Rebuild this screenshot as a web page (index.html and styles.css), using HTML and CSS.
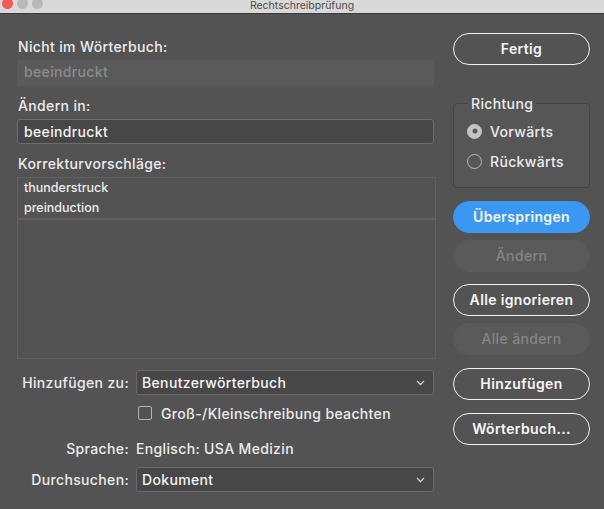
FILE: index.html
```html
<!DOCTYPE html>
<html lang="de">
<head>
    <meta charset="UTF-8">
    <title>Rechtschreibprüfung</title>
    <link rel="stylesheet" href="styles.css">
</head>
<body>
    <div class="titlebar">
        <span class="light red"></span>
        <span class="light"></span>
        <span class="light"></span>
        <span class="title">Rechtschreibprüfung</span>
    </div>
    <div class="dialog">
        <div class="left">
            <div class="label">Nicht im Wörterbuch:</div>
            <div class="field disabled">beeindruckt</div>
            <div class="label gap">Ändern in:</div>
            <div class="field input">beeindruckt</div>
            <div class="label gap">Korrekturvorschläge:</div>
            <div class="list">
                <div class="list-top">
                    <div>thunderstruck</div>
                    <div>preinduction</div>
                </div>
            </div>

            <div class="row first">
                <span class="row-label">Hinzufügen zu:</span>
                <div class="select">
                    Benutzerwörterbuch
                    <svg class="chev" width="9" height="6" viewBox="0 0 9 6"><path d="M1 1 L4.5 4.5 L8 1" fill="none" stroke="#d0d0d0" stroke-width="1.3"/></svg>
                </div>
            </div>
            <div class="row check-row">
                <span class="row-label"></span>
                <span class="checkbox"></span>
                <span>Groß-/Kleinschreibung beachten</span>
            </div>
            <div class="row lang-row">
                <span class="row-label">Sprache:</span>
                <span>Englisch: USA Medizin</span>
            </div>
            <div class="row search-row">
                <span class="row-label">Durchsuchen:</span>
                <div class="select">
                    Dokument
                    <svg class="chev" width="9" height="6" viewBox="0 0 9 6"><path d="M1 1 L4.5 4.5 L8 1" fill="none" stroke="#d0d0d0" stroke-width="1.3"/></svg>
                </div>
            </div>
        </div>

        <div class="right">
            <div class="btn">Fertig</div>
            <fieldset class="group">
                <legend>Richtung</legend>
                <div class="radio-row"><span class="radio on"></span>Vorwärts</div>
                <div class="radio-row"><span class="radio"></span>Rückwärts</div>
            </fieldset>
            <div class="btn primary tight">Überspringen</div>
            <div class="btn off">Ändern</div>
            <div class="btn tight">Alle ignorieren</div>
            <div class="btn off wide">Alle ändern</div>
            <div class="btn">Hinzufügen</div>
            <div class="btn">Wörterbuch...</div>
        </div>
    </div>
</body>
</html>
```

FILE: styles.css
```css
body, html {
    margin: 0;
    padding: 0;
    height: 100%;
    background-color: #535353;
    font-family: Inter, "Open Sans", sans-serif;
    color: #ececec;
    letter-spacing: 0.35px;
    overflow: hidden;
}

.titlebar {
    height: 13px;
    background-color: #d9d9d9;
    border-bottom: 1px solid #3a3a3a;
    display: flex;
    align-items: center;
    position: relative;
}

.light {
    width: 11px;
    height: 11px;
    border-radius: 50%;
    background-color: #b9b9b9;
    margin-left: 4px;
    margin-top: -6px;
    flex-shrink: 0;
}

.light.red {
    background-color: #f25a53;
    margin-left: 2px;
}

.title {
    position: absolute;
    left: 0;
    right: 0;
    top: 0;
    text-align: center;
    font-size: 10.5px;
    line-height: 11px;
    letter-spacing: 0;
    color: #4b4b4b;
}

.dialog {
    display: flex;
    padding: 19px 0 0 17px;
}

.left {
    width: 417px;
    margin-top: 2px;
    display: flex;
    flex-direction: column;
}

.right {
    width: 137px;
    margin-left: 19px;
    display: flex;
    flex-direction: column;
}

.label {
    font-size: 14px;
    font-weight: 500;
    line-height: 17px;
    margin-top: 3px;
    padding-left: 1px;
    margin-bottom: 5px;
}

.label.gap {
    margin-top: 11px;
}

.field {
    height: 26px;
    box-sizing: border-box;
    font-size: 14px;
    font-weight: 500;
    line-height: 24px;
    padding-left: 6px;
}

.field.disabled {
    background-color: #5a5a5a;
    color: #8c8c8c;
    padding-left: 7px;
}

.field.input {
    height: 25px;
    background-color: #474747;
    border: 1px solid #6e6e6e;
    border-radius: 3px;
    color: #f4f4f4;
    line-height: 23px;
}

.list {
    height: 182px;
    box-sizing: border-box;
    border: 1px solid #5f5f5f;
    width: 419px;
}

.list-top {
    height: 40px;
    border-bottom: 2px solid #5f5f5f;
    font-size: 12.5px;
    font-weight: 500;
    letter-spacing: 0;
    line-height: 20px;
    padding-left: 6px;
}

.row {
    display: flex;
    align-items: center;
    font-size: 14px;
    font-weight: 500;
    height: 25px;
}

.row.first {
    margin-top: 11px;
}

.row-label {
    width: 112px;
    text-align: right;
    margin-right: 7px;
    flex-shrink: 0;
}

.check-row {
    margin-top: 6px;
    height: 24px;
}

.lang-row {
    margin-top: 11px;
    height: 24px;
}

.search-row {
    margin-top: 7px;
}

.checkbox {
    width: 12px;
    height: 12px;
    border: 1px solid #b4b4b4;
    border-radius: 2px;
    margin-left: 2px;
    margin-right: 9px;
}

.select {
    position: relative;
    flex: 1;
    height: 25px;
    box-sizing: border-box;
    background-color: #474747;
    border: 1px solid #6a6a6a;
    border-radius: 3px;
    line-height: 23px;
    padding-left: 5px;
    color: #f4f4f4;
}

.chev {
    position: absolute;
    right: 8px;
    top: 9px;
}

.btn {
    height: 32px;
    box-sizing: border-box;
    border: 1.5px solid #f0f0f0;
    border-radius: 16px;
    text-align: center;
    line-height: 29px;
    font-size: 14px;
    font-weight: 600;
    color: #f6f6f6;
    margin-bottom: 13px;
}

.btn.tight {
    margin-bottom: 7px;
}

.btn.primary {
    background-color: #3b98f2;
    border-color: #3b98f2;
}

.btn.off {
    background-color: #5a5a5a;
    border-color: #5a5a5a;
    color: #858585;
    font-weight: 500;
    margin-bottom: 12px;
}

.btn.off.wide {
    margin-bottom: 13px;
}

.group {
    margin: 17px 0 13px 0;
    padding: 4px 0 0 13px;
    height: 93px;
    box-sizing: border-box;
    border: 1px solid #444;
    border-radius: 4px;
    background-color: #565656;
}

.group legend {
    font-size: 14px;
    font-weight: 500;
    padding: 0 3px;
    margin-left: 1px;
    line-height: 17px;
}

.radio-row {
    display: flex;
    align-items: center;
    font-size: 14px;
    font-weight: 500;
    height: 30px;
}

.radio {
    width: 15px;
    height: 15px;
    box-sizing: border-box;
    border-radius: 50%;
    border: 1.3px solid #bdbdbd;
    margin-right: 8px;
    position: relative;
}

.radio.on {
    background-color: #c4c4c4;
    border-color: #c4c4c4;
}

.radio.on::after {
    content: '';
    position: absolute;
    width: 5px;
    height: 5px;
    border-radius: 50%;
    background-color: #5a5a5a;
    left: 50%;
    top: 50%;
    transform: translate(-50%, -50%);
}
```
